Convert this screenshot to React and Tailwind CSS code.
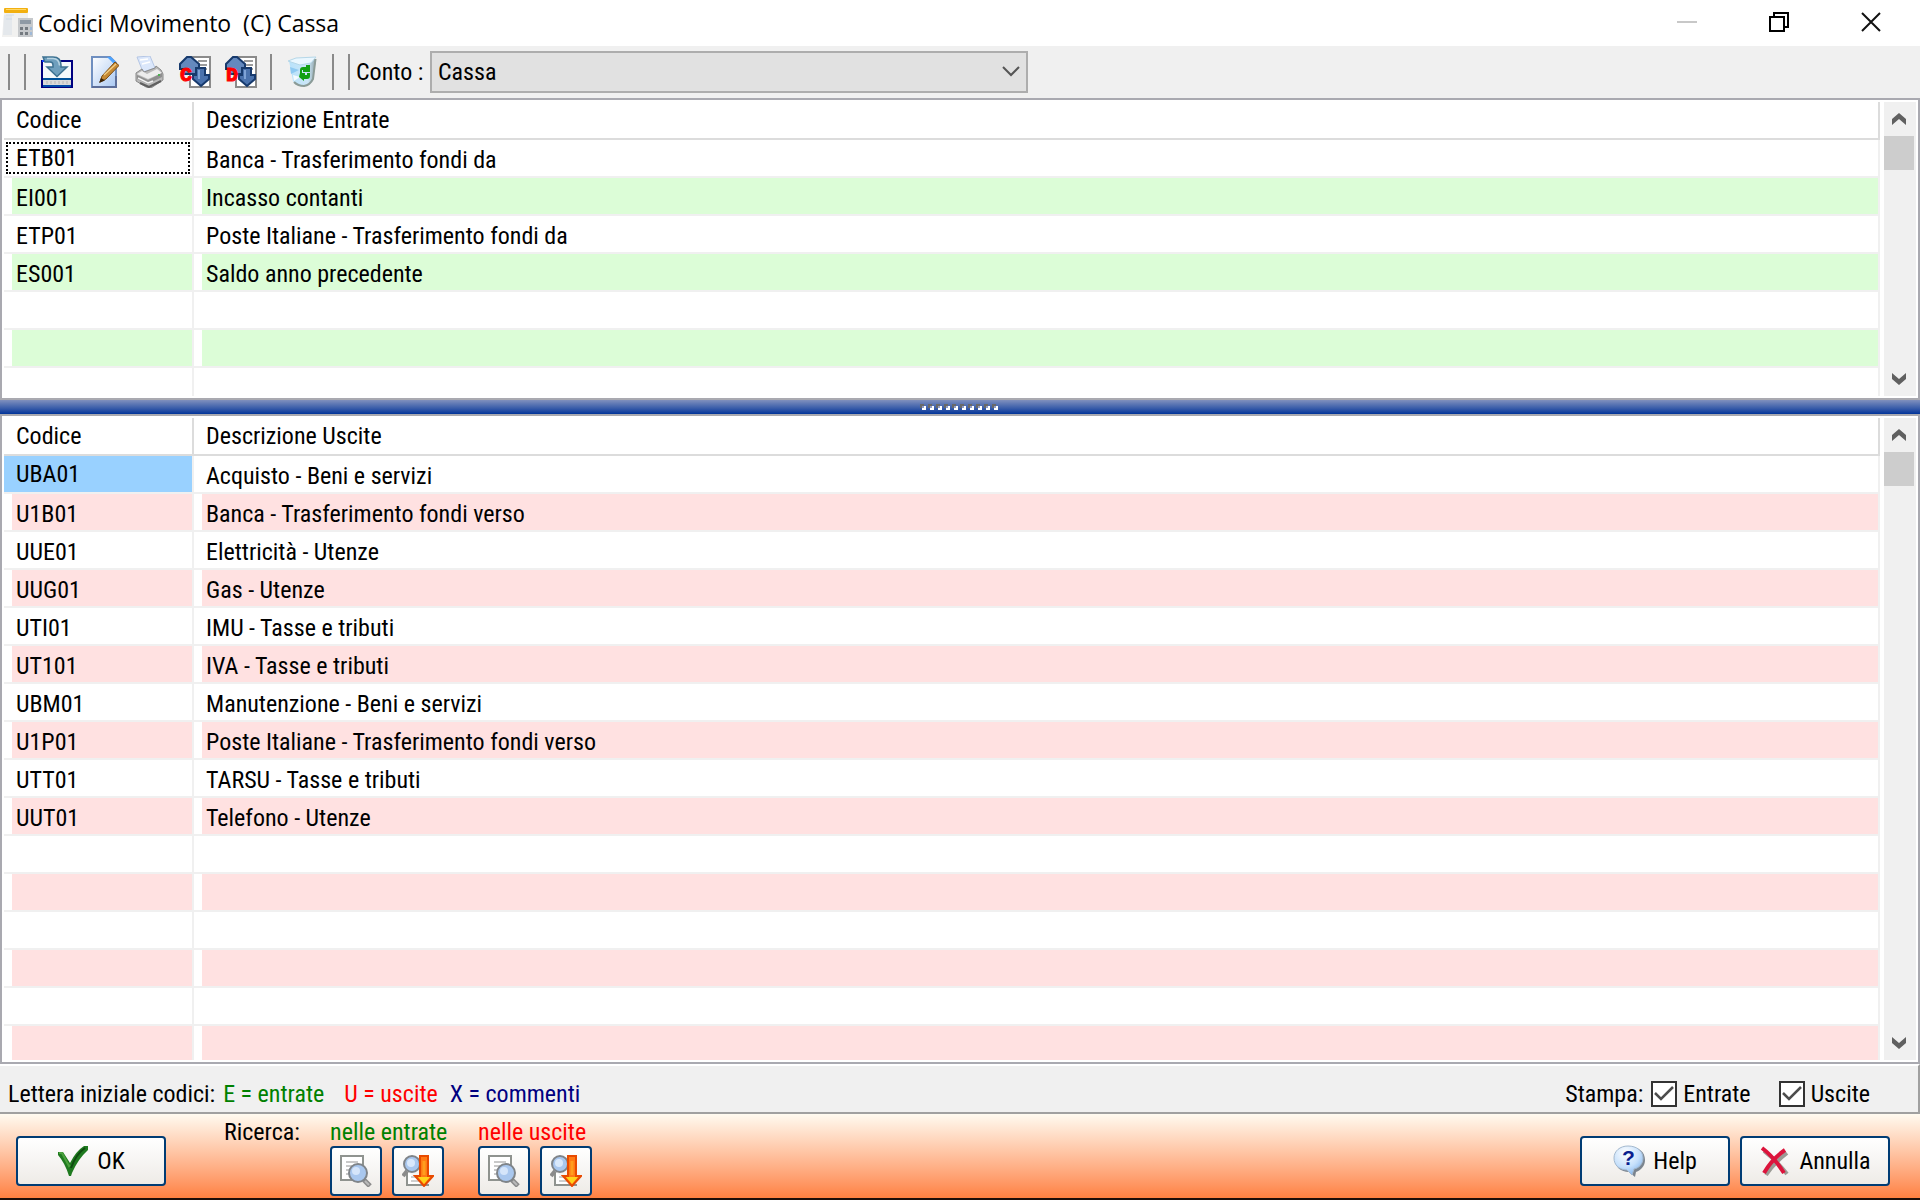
import { useState } from 'react';

const entrate = [
  ['ETB01', 'Banca - Trasferimento fondi da'],
  ['EI001', 'Incasso contanti'],
  ['ETP01', 'Poste Italiane - Trasferimento fondi da'],
  ['ES001', 'Saldo anno precedente'],
];

const uscite = [
  ['UBA01', 'Acquisto - Beni e servizi'],
  ['U1B01', 'Banca - Trasferimento fondi verso'],
  ['UUE01', 'Elettricità - Utenze'],
  ['UUG01', 'Gas - Utenze'],
  ['UTI01', 'IMU - Tasse e tributi'],
  ['UT101', 'IVA - Tasse e tributi'],
  ['UBM01', 'Manutenzione - Beni e servizi'],
  ['U1P01', 'Poste Italiane - Trasferimento fondi verso'],
  ['UTT01', 'TARSU - Tasse e tributi'],
  ['UUT01', 'Telefono - Utenze'],
];

// the grids always show some blank striped rows under the data
const fillRows = (rows, count) => [...rows, ...Array(count - rows.length).fill(['', ''])];

function AppIcon() {
  return (
    <svg width="32" height="32" viewBox="0 0 32 32">
      <path d="M2 6h24v24H0z" fill="#f1f1f0" />
      <path d="M2 8h8v20H1z" fill="#e4e8ec" />
      <rect x="2" y="1" width="24" height="5" rx="1" fill="#f2b010" />
      <rect x="4" y="2" width="20" height="1" fill="#ffd766" />
      <path d="M4 8h8M4 12h6" stroke="#cfdcea" strokeWidth="1" />
      <rect x="16" y="11" width="15" height="19" fill="#c6c9cc" />
      <rect x="18" y="13" width="11" height="4" fill="#8f9aa5" />
      <path d="M18 20h3v3h-3zM23 20h3v3h-3zM18 25h3v3h-3zM23 25h3v3h-3z" fill="#747a80" />
      <path d="M28 20h2v3h-2zM28 25h2v3h-2z" fill="#9fb9d8" />
    </svg>
  );
}

function SaveIcon() {
  return (
    <svg width="32" height="32" viewBox="0 0 32 32">
      <rect x="1" y="5" width="30" height="26" fill="#f4f8fb" stroke="#000080" strokeWidth="2" />
      <rect x="2" y="22" width="28" height="2" fill="#00529a" />
      <rect x="2" y="24" width="28" height="6" fill="#d9d9d9" />
      <path d="M6 25v3M10 25v3M14 25v3M18 25v3M22 25v3M26 25v3" stroke="#b5b5b5" strokeWidth="1" />
      <path d="M2 30h28" stroke="#0048a8" strokeWidth="2" />
      <path d="M1 5h5" stroke="#0a3cff" strokeWidth="2" />
      <path d="M2 1h10q8 0 8 8v2h6L16 20.500 6 11h6V9q0-3-3-3H4z" fill="#6f9fbd" stroke="#3d7191" strokeWidth="1.500" />
      <path d="M6 2.500h6q6 0 6.500 7" stroke="#b7d3e2" strokeWidth="1.500" fill="none" />
    </svg>
  );
}

function EditIcon() {
  return (
    <svg width="32" height="32" viewBox="0 0 32 32">
      <defs>
        <linearGradient id="sheet" x1="0" y1="0" x2="1" y2="1">
          <stop offset="0" stopColor="#ffffff" />
          <stop offset="1" stopColor="#a9c8f2" />
        </linearGradient>
      </defs>
      <path d="M5 1h18l6 6v24H5z" fill="url(#sheet)" stroke="#6f8fc0" strokeWidth="2" />
      <path d="M20 1h4l5 5v4z" fill="#4da3ff" />
      <path d="M5 31h24V20" fill="none" stroke="#5c6e99" strokeWidth="2" />
      <path d="M13 26l2-6L28 6l4 3.500L19 23z" fill="#c58a35" stroke="#7a4c12" strokeWidth="1" />
      <path d="M17 19L29 8" stroke="#f3cf86" strokeWidth="1.500" />
      <path d="M12 27l2-5 4 2.500z" fill="#3d2508" />
    </svg>
  );
}

function PrintIcon() {
  return (
    <svg width="32" height="32" viewBox="0 0 32 32">
      <path d="M4 1l13-1 5 12-12 4z" fill="#dbe7fb" stroke="#b5c6e4" strokeWidth="1" />
      <path d="M7 4l8-1M9 8l8-2" stroke="#ffffff" strokeWidth="1.500" />
      <path d="M3 17l6-4 2 3 11-4 1-2 5 4 2 4v6l-12 8-5-1-10-6z" fill="#b9b9b9" stroke="#8a8a8a" strokeWidth="1" />
      <path d="M4 18l11 5 14-6-5-4-10 5-5-3z" fill="#ececec" />
      <path d="M4 19v4l11 5 14-7v-4L15 24z" fill="#8f8f8f" />
      <path d="M5 22l10 5 5-2" stroke="#f2f2f2" strokeWidth="1.500" fill="none" />
      <path d="M7 27l9 4 12-6" stroke="#5f5f5f" strokeWidth="2" fill="none" />
      <rect x="25" y="18" width="2" height="2" fill="#4caf50" />
    </svg>
  );
}

function SortIcon({ letter }) {
  return (
    <svg width="32" height="32" viewBox="0 0 32 32">
      <rect x="11" y="1" width="20" height="30" fill="#ffffff" stroke="#8b8b8b" strokeWidth="2" />
      <path d="M19 5h9M21 9h7M25 13h3" stroke="#7c7c7c" strokeWidth="1.500" />
      <path d="M8 1h4l8 7v5h-3v5H5v-5H1V8z" fill="#6489be" stroke="#173a6d" strokeWidth="2" />
      <path d="M17 12h9v7h4v4l-8 7-8-7v-4h3z" fill="#4a72ad" stroke="#173a6d" strokeWidth="2" />
      <path d="M20 14v9" stroke="#7fa3d6" strokeWidth="2" />
      <text x="1" y="25" fill="#ff0000" stroke="#ff0000" fontFamily="Liberation Mono, monospace" fontWeight="700" fontSize="20">
        {letter}
      </text>
    </svg>
  );
}

function RecycleIcon() {
  return (
    <svg width="32" height="32" viewBox="0 0 32 32">
      <defs>
        <linearGradient id="bin" x1="0" y1="0" x2="1" y2="0">
          <stop offset="0" stopColor="#b8e2fb" />
          <stop offset="0.700" stopColor="#cbe6f7" />
          <stop offset="1" stopColor="#8fa2a8" />
        </linearGradient>
      </defs>
      <path d="M3 5L30 3l-3 21q-3 6-9 6-8 0-11-5z" fill="url(#bin)" />
      <path d="M2 5l8-3 20-1-5 6-11 2z" fill="#eaf7ff" stroke="#b5d7e8" strokeWidth="1" />
      <path d="M4 11l9 3-8 4z" fill="#8fcaf2" />
      <path d="M7 19l7 2-6 4z" fill="#f4fbff" />
      <path d="M29.500 3L27 23q-3 6-9 7-6 0-10-4" fill="none" stroke="#8b9b97" strokeWidth="2" />
      <path d="M14 17v-3q0-3 3-3h3V9h4v7h-7v-2h-1v3z" fill="#12a012" />
      <path d="M24 17v3q0 3-3 3h-3v2l-5-4 1-4h5v2h2v-2z" fill="#12a012" />
    </svg>
  );
}

function SearchIcon() {
  return (
    <svg width="32" height="32" viewBox="0 0 32 32">
      <rect x="1" y="1" width="22" height="24" fill="#ffffff" stroke="#8f938f" strokeWidth="2" />
      <path d="M6 7h12M6 11h6M6 15h4M6 19h4" stroke="#c9c9c9" strokeWidth="2" />
      <path d="M24 25l6 6" stroke="#8b8b8b" strokeWidth="5" />
      <path d="M25 26l4 4" stroke="#b9b9b9" strokeWidth="2" />
      <circle cx="18" cy="18" r="9" fill="#a9c7ee" stroke="#7f8489" strokeWidth="2" />
      <circle cx="16" cy="16" r="4" fill="#d5e5fa" />
    </svg>
  );
}

function SearchNextIcon() {
  return (
    <svg width="32" height="32" viewBox="0 0 32 32">
      <path d="M5 17v13h22" fill="#ffffff" stroke="#8f938f" strokeWidth="2" />
      <path d="M9 22h8M9 26h8" stroke="#cfcfcf" strokeWidth="2" />
      <path d="M5 16l-4 5" stroke="#8b8b8b" strokeWidth="4" />
      <circle cx="10" cy="9" r="8" fill="#a9c7ee" stroke="#7f8489" strokeWidth="2" />
      <circle cx="9" cy="8" r="4" fill="#d9e8fb" />
      <path d="M18 1h8v20h5l-9 10-9-10h5z" fill="#ff7a14" stroke="#e84a00" strokeWidth="2" />
      <path d="M22 6v14" stroke="#ff9d1e" strokeWidth="3" />
      <path d="M16 22h12l-6 7z" fill="#ffd21a" />
    </svg>
  );
}

function CheckIcon() {
  return (
    <svg width="32" height="32" viewBox="0 0 32 32">
      <path d="M1 7h5l7 11Q19 6 27 1h4v4q-10 9-16 23l-1 3h-2Q8 18 1 10z" fill="#1f7a1f" />
      <path d="M2 8h3l7 13 1-1" fill="none" stroke="#4aa13c" strokeWidth="2" />
      <path d="M14 23Q19 9 28 3" fill="none" stroke="#0f4a10" strokeWidth="2" />
    </svg>
  );
}

function HelpIcon() {
  return (
    <svg width="32" height="32" viewBox="0 0 32 32">
      <defs>
        <radialGradient id="bubble" cx="0.400" cy="0.250" r="0.800">
          <stop offset="0" stopColor="#ffffff" />
          <stop offset="0.600" stopColor="#c6e0fb" />
          <stop offset="1" stopColor="#7fb2ec" />
        </radialGradient>
      </defs>
      <path d="M17 2c9 0 15 5 15 13 0 6-4 10-9 12l-1 5-6-5C8 27 2 22 2 15 2 7 8 2 17 2z" fill="#7a848e" />
      <path d="M15 1c9 0 15 5 15 12 0 6-4 10-9 11l-2 6-5-5C6 25 1 20 1 13 1 6 7 1 15 1z" fill="url(#bubble)" stroke="#a4b9cf" strokeWidth="1" />
      <text x="9" y="20" fill="#0a1f8f" fontFamily="Liberation Sans, sans-serif" fontWeight="700" fontSize="21">
        ?
      </text>
    </svg>
  );
}

function CancelIcon() {
  return (
    <svg width="32" height="32" viewBox="0 0 32 32">
      <path d="M5 6q12 9 23 23M28 8Q15 18 7 30" fill="none" stroke="#9b9b95" strokeWidth="4" />
      <path d="M3 3q12 9 22 25" fill="none" stroke="#dc143c" strokeWidth="4" />
      <path d="M26 5Q13 14 5 28" fill="none" stroke="#dc143c" strokeWidth="4" />
    </svg>
  );
}

function ToolButton({ label, className, children }) {
  return (
    <button aria-label={label} className={`flex items-center justify-center ${className || 'w-[46px]'}`}>
      {children}
    </button>
  );
}

function Separator() {
  return <div className="w-[2px] h-9 bg-[#8a8a8a]" />;
}

function ScrollArrow({ down }) {
  return (
    <button aria-label={down ? 'Giù' : 'Su'} className="w-[30px] h-[34px] flex items-center justify-center">
      <svg width="14" height="12" viewBox="0 0 14 12" fill="#606060" className={down ? 'rotate-180' : ''}>
        <path d="M7 0L14 6v6L7 6 0 12V6z" />
      </svg>
    </button>
  );
}

function Grid({ title, rows, stripe, focus, className }) {
  return (
    <div className={`min-h-0 flex border-2 border-[#a9a9b0] bg-white p-[2px] ${className}`}>
      <div className="flex-1 min-h-0 overflow-hidden">
        <table className="w-full table-fixed border-separate border-spacing-0 text-left">
          <thead>
            <tr>
              <th className="w-[190px] p-0 font-normal border-b-2 border-r-2 border-[#dcdcdc]">
                <div className="h-9 leading-9 pl-3">Codice</div>
              </th>
              <th className="p-0 font-normal border-b-2 border-r-2 border-[#dcdcdc]">
                <div className="h-9 leading-9 pl-3">{title}</div>
              </th>
            </tr>
          </thead>
          <tbody>
            {rows.map(([code, text], i) => {
              const bg = i % 2 ? stripe : 'bg-white';
              return (
                <tr key={i}>
                  {i === 0 ? (
                    <td className={`border-b-2 border-r-2 border-[#f0f0f0] ${focus === 'selected' ? 'p-0 bg-[#99d1ff]' : 'p-[2px]'}`}>
                      {focus === 'selected' ? (
                        <div className="h-9 leading-9 pl-3">{code}</div>
                      ) : (
                        <div className="h-8 leading-7 pl-2 border-2 border-dotted border-black">{code}</div>
                      )}
                    </td>
                  ) : (
                    <td className="p-0 pl-2 border-b-2 border-r-2 border-[#f0f0f0]">
                      <div className={`h-9 leading-10 pl-1 ${bg}`}>{code}</div>
                    </td>
                  )}
                  <td className="p-0 pl-2 border-b-2 border-r-2 border-[#f0f0f0]">
                    <div className={`h-9 leading-10 pl-1 ${bg}`}>{text}</div>
                  </td>
                </tr>
              );
            })}
          </tbody>
        </table>
      </div>
      <div className="w-8 ml-1 bg-[#f0f0f0] flex flex-col">
        <ScrollArrow />
        <div className="h-[34px] w-[30px] bg-[#cdcdcd]" />
        <div className="flex-1" />
        <ScrollArrow down />
      </div>
    </div>
  );
}

function PrintOption({ label, checked, onChange }) {
  return (
    <label className="flex items-center gap-[6px]">
      <span className="grid">
        <input
          type="checkbox"
          checked={checked}
          onChange={onChange}
          className="col-start-1 row-start-1 appearance-none w-[26px] h-[26px] bg-white border-2 border-[#333333]"
        />
        {checked && (
          <svg width="26" height="26" viewBox="0 0 26 26" className="col-start-1 row-start-1 pointer-events-none">
            <path d="M4 12l6 6L22 6" fill="none" stroke="#4d4d4d" strokeWidth="2.500" />
          </svg>
        )}
      </span>
      {label}
    </label>
  );
}

const buttonStyle =
  'flex items-center justify-center border-2 border-[#003c74] rounded-[4px] bg-linear-to-b from-white to-[#eeebe7]';

function SearchGroup({ label, color }) {
  return (
    <div className="w-[114px] flex flex-col">
      <span className={`h-[30px] leading-8 ${color}`}>{label}</span>
      <div className="flex gap-[10px]">
        <button aria-label={`Cerca ${label}`} className={`w-[52px] h-[50px] ${buttonStyle}`}>
          <SearchIcon />
        </button>
        <button aria-label={`Cerca successivo ${label}`} className={`w-[52px] h-[50px] ${buttonStyle}`}>
          <SearchNextIcon />
        </button>
      </div>
    </div>
  );
}

export default function App() {
  const [conto, setConto] = useState('Cassa');
  const [stampa, setStampa] = useState({ entrate: true, uscite: true });

  return (
    <div className="h-screen flex flex-col bg-[#f0f0f0] text-black text-[24px] font-['Roboto_Condensed','Roboto',sans-serif] whitespace-nowrap overflow-hidden">
      {/* Title bar */}
      <div className="h-[46px] flex bg-white pl-[2px] pr-[3px]">
        <div className="flex-1 flex items-center gap-1">
          <AppIcon />
          <h1 className="text-[23px] font-['Open_Sans',sans-serif] whitespace-pre">Codici Movimento  (C) Cassa</h1>
        </div>
        <button aria-label="Riduci a icona" className="w-[92px] h-11 flex items-center justify-center">
          <svg width="20" height="20" viewBox="0 0 20 20">
            <path d="M0 10h20" stroke="#c8c8c8" strokeWidth="2" />
          </svg>
        </button>
        <button aria-label="Ripristina" className="w-[92px] h-11 flex items-center justify-center">
          <svg width="20" height="20" viewBox="0 0 20 20" fill="none" stroke="#000000" strokeWidth="2">
            <path d="M1 5h14v14H1zM5 5V1h14v14h-4" />
          </svg>
        </button>
        <button aria-label="Chiudi" className="w-[92px] h-11 flex items-center justify-center">
          <svg width="20" height="20" viewBox="0 0 20 20" stroke="#111111" strokeWidth="2">
            <path d="M1 1l18 18M19 1L1 19" />
          </svg>
        </button>
      </div>

      {/* Toolbar */}
      <div className="h-[52px] flex items-center pl-2">
        <Separator />
        <div className="ml-[14px]"><Separator /></div>
        <div className="flex ml-2 mr-[6px]">
          <ToolButton label="Salva"><SaveIcon /></ToolButton>
          <ToolButton label="Modifica"><EditIcon /></ToolButton>
          <ToolButton label="Stampa"><PrintIcon /></ToolButton>
          <ToolButton label="Ordina per codice"><SortIcon letter="C" /></ToolButton>
          <ToolButton label="Ordina per descrizione"><SortIcon letter="D" /></ToolButton>
        </div>
        <Separator />
        <ToolButton label="Elimina" className="w-[60px]"><RecycleIcon /></ToolButton>
        <Separator />
        <div className="ml-[14px]"><Separator /></div>
        <label htmlFor="conto" className="w-[80px] pl-[6px]">Conto :</label>
        <div className="grid items-center w-[598px]">
          <select
            id="conto"
            value={conto}
            onChange={(e) => setConto(e.target.value)}
            className="col-start-1 row-start-1 appearance-none h-[42px] pl-[6px] border-2 border-[#adadad] bg-[#e1e1e1]"
          >
            <option>Cassa</option>
            <option>Banca</option>
            <option>Poste Italiane</option>
          </select>
          <svg width="18" height="12" viewBox="0 0 18 12" className="col-start-1 row-start-1 justify-self-end mr-2 pointer-events-none">
            <path d="M1 1l8 8 8-8" fill="none" stroke="#555555" strokeWidth="2" />
          </svg>
        </div>
      </div>

      <Grid title="Descrizione Entrate" rows={fillRows(entrate, 7)} stripe="bg-[#dcfdd7]" focus="dotted" className="flex-[294]" />

      {/* Splitter */}
      <div className="h-[14px] flex items-center justify-center bg-linear-to-b from-[#8090bd] to-[#003399]">
        <svg width="80" height="6" viewBox="0 0 80 6">
          {Array.from({ length: 10 }, (_, i) => (
            <g key={i}>
              <rect x={i * 8} y="0" width="4" height="4" fill="#696969" />
              <rect x={i * 8 + 2} y="2" width="4" height="4" fill="#ffffff" />
              <rect x={i * 8 + 2} y="2" width="2" height="2" fill="#8f9cc8" />
            </g>
          ))}
        </svg>
      </div>

      <Grid title="Descrizione Uscite" rows={fillRows(uscite, 16)} stripe="bg-[#ffe1e1]" focus="selected" className="flex-[642]" />

      {/* Legend and print options */}
      <div className="h-[50px] flex items-center border-t-2 border-t-white border-b-2 border-b-[#a0a0a0] border-r-2 border-r-[#a0a0a0] pl-2 pr-12 pt-[10px]">
        <span>Lettera iniziale codici:</span>
        <span className="ml-2 text-[#008000]">E = entrate</span>
        <span className="ml-5 text-[#ff0000]">U = uscite</span>
        <span className="ml-3 text-[#000080]">X = commenti</span>
        <div className="ml-auto flex items-center">
          <span className="mr-2">Stampa:</span>
          <PrintOption
            label="Entrate"
            checked={stampa.entrate}
            onChange={() => setStampa({ ...stampa, entrate: !stampa.entrate })}
          />
          <div className="w-7" />
          <PrintOption
            label="Uscite"
            checked={stampa.uscite}
            onChange={() => setStampa({ ...stampa, uscite: !stampa.uscite })}
          />
        </div>
      </div>

      {/* Footer */}
      <div className="h-[86px] flex items-start pl-4 pr-[30px] border-b-2 border-[#1c0d08] bg-linear-to-b from-[#fffaf0] to-[#ff8040]">
        <button className={`mt-[22px] w-[150px] h-[50px] gap-2 ${buttonStyle}`}>
          <CheckIcon />
          OK
        </button>
        <span className="w-[106px] ml-[58px] mt-[2px] leading-8">Ricerca:</span>
        <div className="flex gap-[34px] mt-[2px]">
          <SearchGroup label="nelle entrate" color="text-[#008000]" />
          <SearchGroup label="nelle uscite" color="text-[#ff0000]" />
        </div>
        <div className="ml-auto mt-[22px] flex gap-[10px]">
          <button className={`w-[150px] h-[50px] gap-2 ${buttonStyle}`}>
            <HelpIcon />
            Help
          </button>
          <button className={`w-[150px] h-[50px] gap-2 ${buttonStyle}`}>
            <CancelIcon />
            Annulla
          </button>
        </div>
      </div>
    </div>
  );
}
